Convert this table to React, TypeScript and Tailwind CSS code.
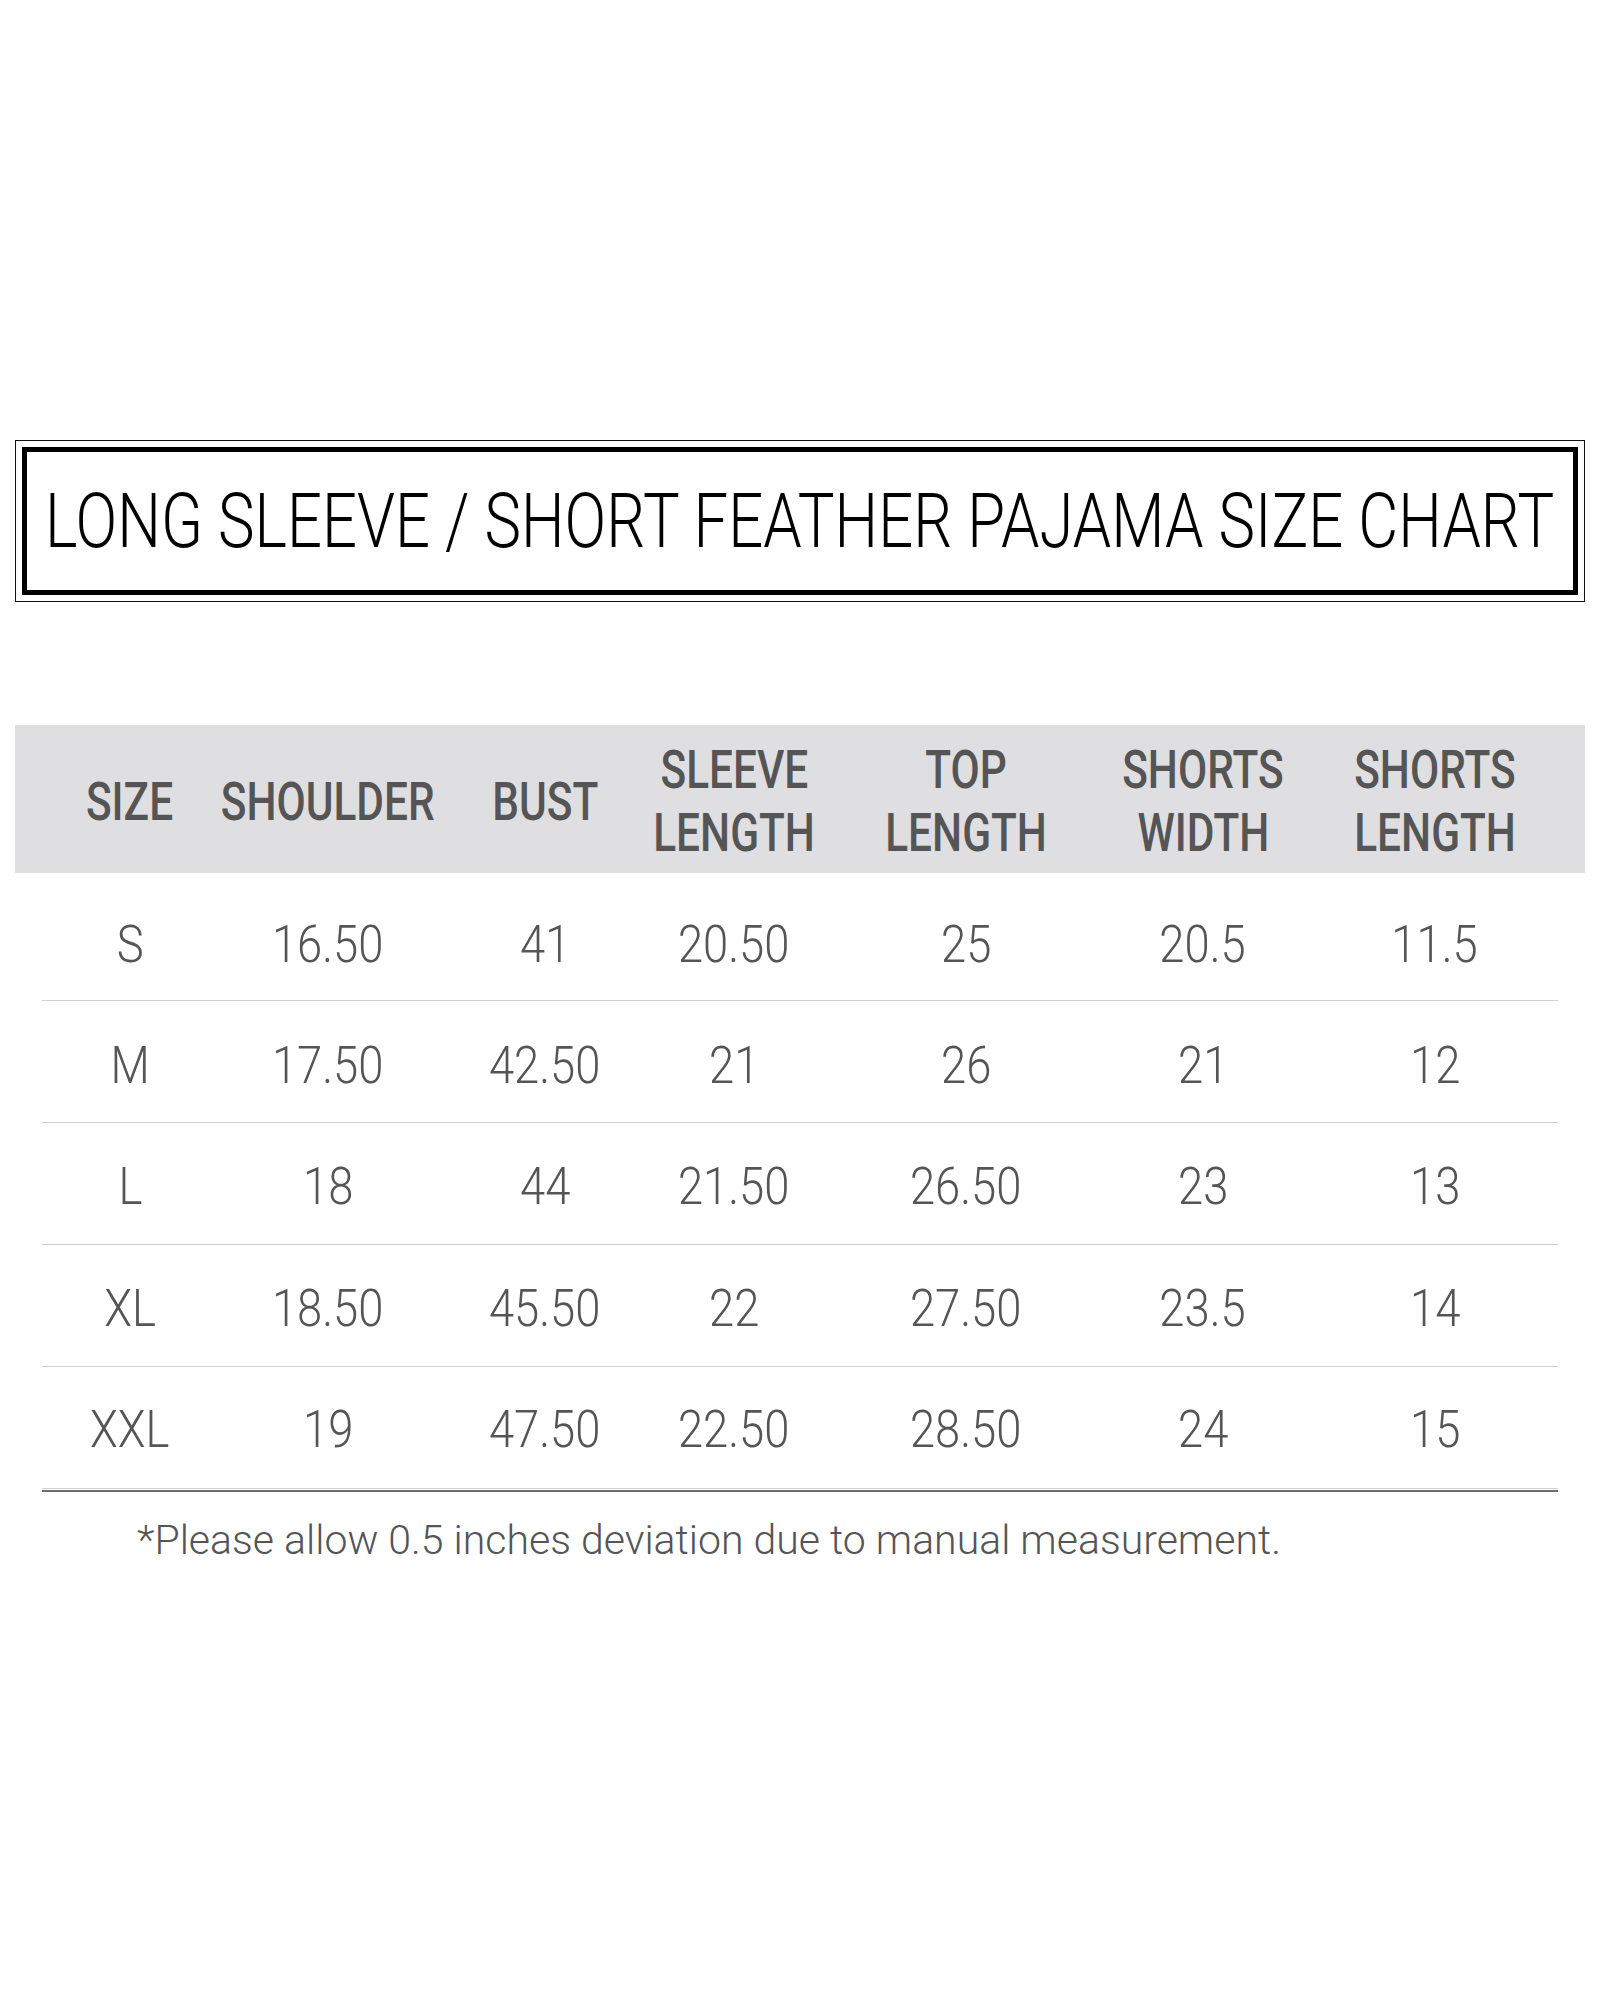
import React from "react";

const headers: string[][] = [
  ["SIZE"],
  ["SHOULDER"],
  ["BUST"],
  ["SLEEVE", "LENGTH"],
  ["TOP", "LENGTH"],
  ["SHORTS", "WIDTH"],
  ["SHORTS", "LENGTH"],
];

const rows: string[][] = [
  ["S", "16.50", "41", "20.50", "25", "20.5", "11.5"],
  ["M", "17.50", "42.50", "21", "26", "21", "12"],
  ["L", "18", "44", "21.50", "26.50", "23", "13"],
  ["XL", "18.50", "45.50", "22", "27.50", "23.5", "14"],
  ["XXL", "19", "47.50", "22.50", "28.50", "24", "15"],
];

const rowHeights = ["h-[128px]", "h-[122px]", "h-[122px]", "h-[122px]", "h-[122px]"];
const rowPads = ["pt-[15px]", "pt-[8px]", "pt-[6px]", "pt-[6px]", "pt-[3px]"];

const gridCols = "grid grid-cols-[184px_212px_222px_156px_308px_166px_298px]";

export default function App() {
  return (
    <div className="w-[1601px] h-[2000px] bg-white overflow-hidden" style={{ fontFamily: "Roboto, 'Liberation Sans', sans-serif" }}>
      {/* Title */}
      <div className="ml-[15px] mt-[440px] w-[1570px] h-[162px] border-[1.5px] border-[#111] p-[6px]">
        <div className="h-full border-[5px] border-black flex items-center justify-center">
          <span className="inline-block whitespace-nowrap text-[76px] leading-none font-light text-black scale-x-[0.81]">
            LONG SLEEVE / SHORT FEATHER PAJAMA SIZE CHART
          </span>
        </div>
      </div>

      {/* Header band */}
      <div className="ml-[15px] mt-[123px] w-[1570px] h-[148px] bg-[#dfdfe1] flex items-center">
        <div className={gridCols + " pl-[23px] w-full pt-[6px]"}>
          {headers.map((h, i) => (
            <div key={i} className="flex flex-col items-center justify-center">
              {h.map((line, j) => (
                <div key={j} className="flex justify-center w-full">
                  <span className="inline-block whitespace-nowrap text-[53px] leading-[63px] font-medium text-[#555555] scale-x-[0.8]">
                    {line}
                  </span>
                </div>
              ))}
            </div>
          ))}
        </div>
      </div>

      {/* Data rows */}
      <div className="ml-[42px] w-[1516px]">
        {rows.map((r, i) => (
          <div key={i} className={rowHeights[i] + " border-b border-[#cfcfcf] flex items-center"}>
            <div className={gridCols + " w-[1542px] -ml-[4px] " + rowPads[i]}>
              {r.map((v, j) => (
                <div key={j} className="flex justify-center">
                  <span className="inline-block whitespace-nowrap text-[51px] leading-none font-light text-[#555555] scale-x-[0.89]">
                    {v}
                  </span>
                </div>
              ))}
            </div>
          </div>
        ))}
        <div className="mt-[1px] h-[2px] bg-[#6e6e6e]" />
      </div>

      {/* Footnote */}
      <div className="ml-[137px] mt-[28px]">
        <span className="inline-block whitespace-nowrap text-[41px] leading-none font-light text-[#555555]">
          *Please allow 0.5 inches deviation due to manual measurement.
        </span>
      </div>
    </div>
  );
}
